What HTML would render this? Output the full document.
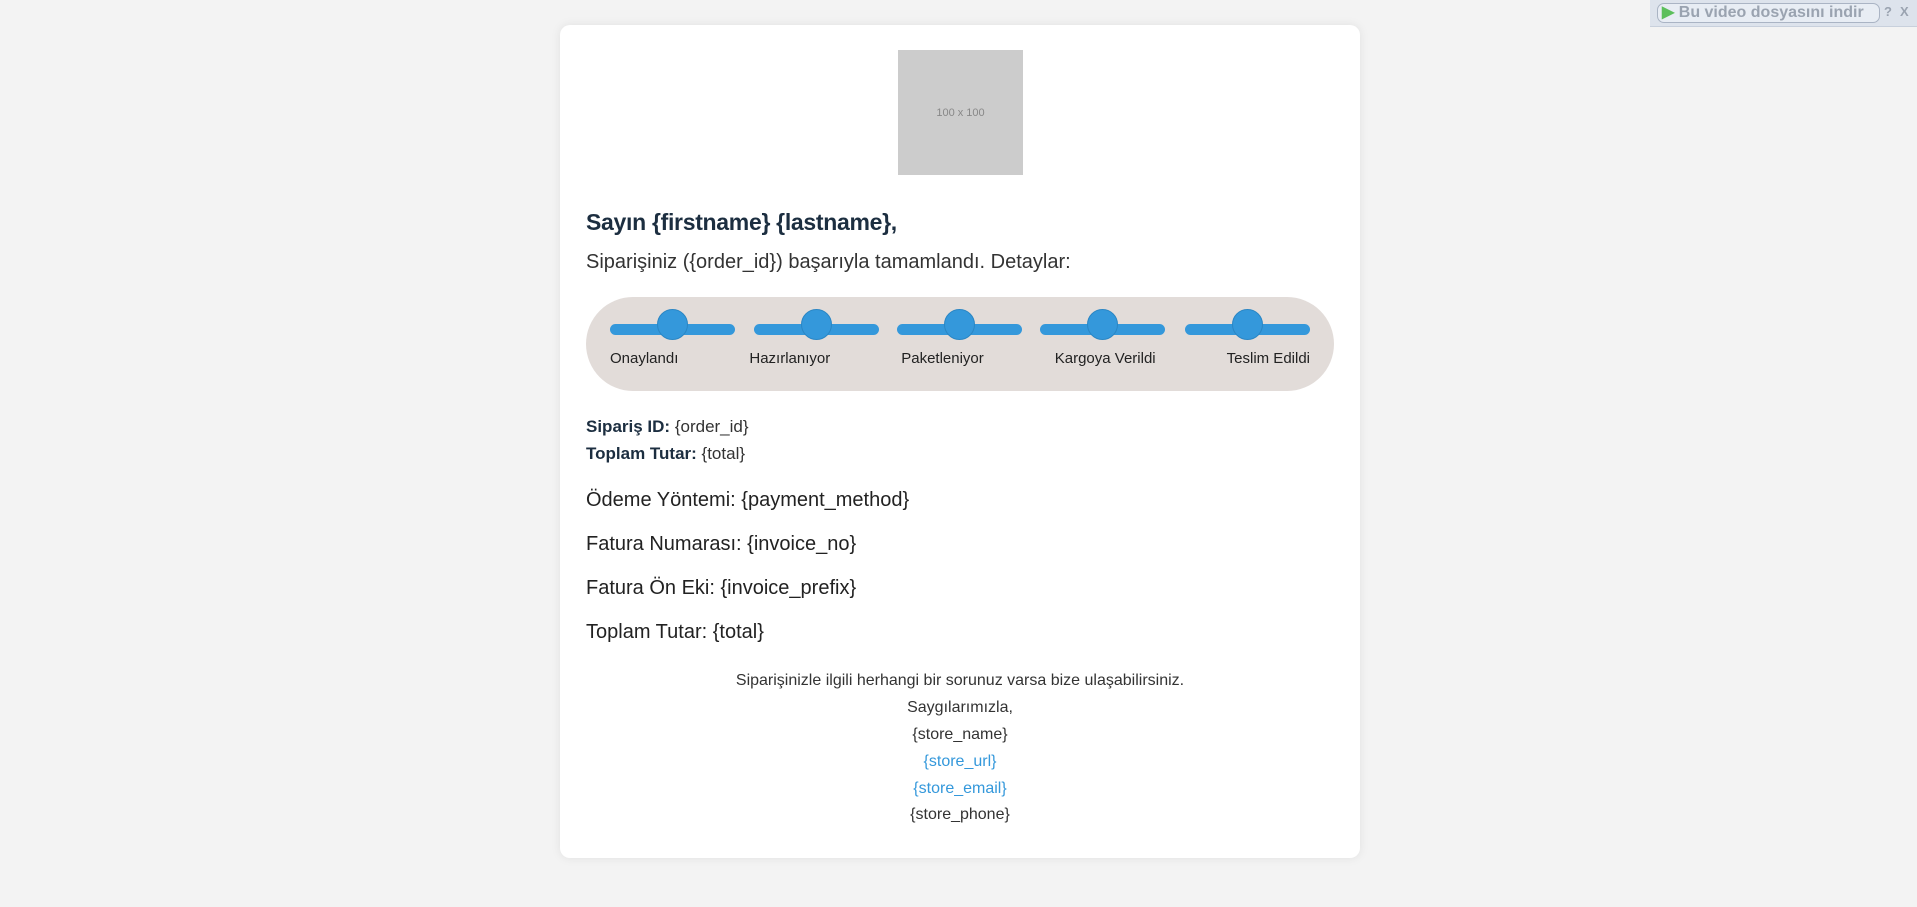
<!DOCTYPE html>
<html><head><meta charset="utf-8"><style>
*{margin:0;padding:0;box-sizing:border-box}
body{width:1917px;height:907px;background:#f3f3f3;font-family:"Liberation Sans",sans-serif;position:relative;overflow:hidden;color:#333}
.card{position:absolute;left:560px;top:25px;width:800px;height:833px;background:#fff;border-radius:10px;box-shadow:0 0 10px rgba(0,0,0,.08)}
.a{position:absolute;white-space:nowrap}
.img{left:338px;top:25px;width:125px;height:125px;background:#ccc;color:#888;font-size:11px;display:flex;align-items:center;justify-content:center}
h1{left:26px;font-size:23px;font-weight:bold;color:#1c2e40;letter-spacing:-0.3px}
.sub{left:26px;font-size:20px;color:#333}
.pill{left:26px;top:272px;width:748px;height:94px;background:#e2dcd9;border-radius:47px}
.bar{position:absolute;top:27px;height:11px;width:125px;background:#3498db;border-radius:6px}
.dot{position:absolute;top:-15px;left:47px;width:31px;height:31px;border-radius:50%;background:#3498db;border:1px solid #2a86c4}
.labels{position:absolute;left:24px;right:24px;top:53px;display:flex;justify-content:space-between;font-size:15px;color:#222}
.b{font-size:17px;color:#333}
.b strong{color:#1c2e40}
.l{font-size:20px;color:#222}
.f{left:0;width:800px;text-align:center;font-size:16px;color:#333}
.f.blue{color:#3498db}
.dl{position:absolute;left:1650px;top:0;width:267px;height:27px;background:#dde3ec;border-bottom:1px solid #c8d0dc}
.btn{position:absolute;left:7px;top:3px;width:223px;height:20px;border:1px solid #aab4c4;border-radius:7px;background:#e8edf4;font-size:16px;font-weight:bold;color:#9aa3b0;line-height:18px;padding-left:4px;overflow:hidden}
</style></head><body>
<div class="card">
<div class="a img">100 x 100</div>
<h1 class="a" style="top:184px;">Sayın {firstname} {lastname},</h1>
<div class="a sub" style="top:226px">Siparişiniz ({order_id}) başarıyla tamamlandı. Detaylar:</div>
<div class="a pill">
<div class="bar" style="left:24px"><div class="dot"></div></div>
<div class="bar" style="left:168px"><div class="dot"></div></div>
<div class="bar" style="left:311px"><div class="dot"></div></div>
<div class="bar" style="left:454px"><div class="dot"></div></div>
<div class="bar" style="left:599px"><div class="dot"></div></div>
<div class="labels"><span>Onaylandı</span><span>Hazırlanıyor</span><span>Paketleniyor</span><span>Kargoya Verildi</span><span>Teslim Edildi</span></div>
</div>
<div class="a b" style="left:26px;top:392px"><strong>Sipariş ID:</strong> {order_id}</div>
<div class="a b" style="left:26px;top:419px"><strong>Toplam Tutar:</strong> {total}</div>
<div class="a l" style="left:26px;top:464px">Ödeme Yöntemi: {payment_method}</div>
<div class="a l" style="left:26px;top:508px">Fatura Numarası: {invoice_no}</div>
<div class="a l" style="left:26px;top:552px">Fatura Ön Eki: {invoice_prefix}</div>
<div class="a l" style="left:26px;top:596px">Toplam Tutar: {total}</div>
<div class="a f" style="top:647px">Siparişinizle ilgili herhangi bir sorunuz varsa bize ulaşabilirsiniz.</div>
<div class="a f" style="top:674px">Saygılarımızla,</div>
<div class="a f" style="top:701px">{store_name}</div>
<div class="a f blue" style="top:728px">{store_url}</div>
<div class="a f blue" style="top:755px">{store_email}</div>
<div class="a f" style="top:781px">{store_phone}</div>
</div>
<div class="dl"><div class="btn"><span style="color:#5cbf5c">▶</span> Bu video dosyasını indir</div>
<span style="position:absolute;left:234px;top:4px;font-size:13px;color:#9aa3b0;font-weight:bold">?</span>
<span style="position:absolute;left:250px;top:4px;font-size:13px;color:#9aa3b0;font-weight:bold">X</span></div>
</body></html>
